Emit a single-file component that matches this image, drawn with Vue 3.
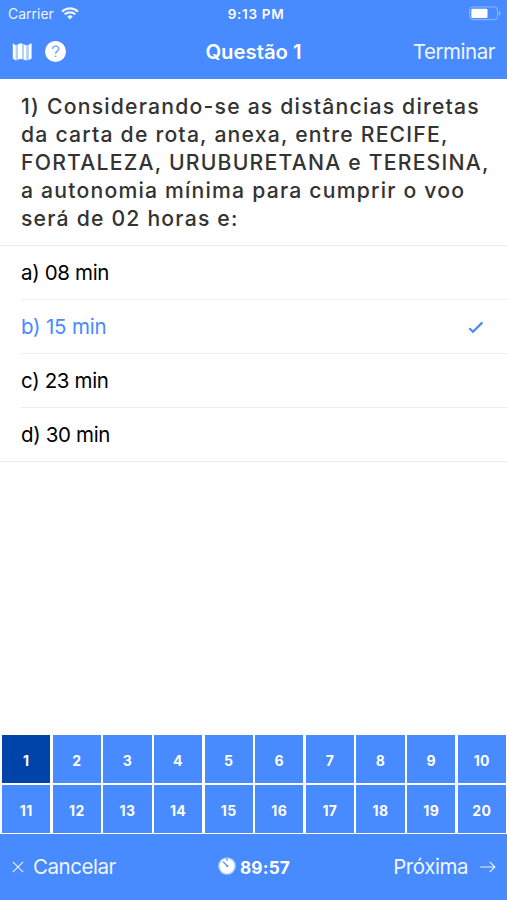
<script setup>
import { ref } from 'vue';

const lines = [
  '1) Considerando-se as distâncias diretas',
  'da carta de rota, anexa, entre RECIFE,',
  'FORTALEZA, URUBURETANA e TERESINA,',
  'a autonomia mínima para cumprir o voo',
  'será de 02 horas e:'
];

const options = [
  { id: 'a', text: '08 min' },
  { id: 'b', text: '15 min' },
  { id: 'c', text: '23 min' },
  { id: 'd', text: '30 min' }
];

const selected = ref('b');
const current = ref(1);
</script>

<template>
  <div class="screen">
    <header class="header">
      <div class="status-bar">
        <div class="carrier">
          <span>Carrier</span>
          <svg class="wifi" viewBox="0 0 18 13">
            <path d="M1 4.6a11.6 11.6 0 0 1 16 0" />
            <path d="M3.7 7.4a7.7 7.7 0 0 1 10.6 0" />
            <path class="dot" d="M9 12.4L6.2 9.6a4 4 0 0 1 5.6 0z" />
          </svg>
        </div>
        <span class="clock">9:13 PM</span>
        <svg class="battery" viewBox="0 0 32 15">
          <rect class="shell" x="0.6" y="0.9" width="28" height="12.8" rx="3.4" />
          <rect x="2.3" y="2.7" width="16.2" height="9.2" rx="1.2" />
          <path class="cap" d="M30 5v4.6c1.8-.6 1.8-4 0-4.6z" />
        </svg>
      </div>

      <div class="nav-bar">
        <div class="nav-icons">
          <svg class="map-icon" viewBox="0 0 20 18">
            <path class="fold" d="M3.8 2.3L6 1.2V16.8L3.8 17.5zM10 0.6L12 1.4V16.7L10 16.2zM14.4 2.3L16.6 1.7V17L14.4 17.6z" />
            <path d="M0.8 0.3L3.8 2.3V17.5L0.8 15.4zM6 1.2L8.6 0.2 10 0.6V16.2L8.6 15.8 6 16.8zM12 1.4L14.4 2.3V17.6L12 16.7zM16.6 1.7L19.6 0.3V15.5L16.6 17z" />
          </svg>
          <svg class="help-icon" viewBox="0 0 20 20">
            <circle cx="10" cy="10" r="10" />
            <path d="M7.1 7.6c.1-3.6 6-3.6 6-.2 0 2.2-3 2.3-3 4.7" />
            <circle class="mark" cx="10.1" cy="14.5" r="0.8" />
          </svg>
        </div>
        <h1 class="title">Questão 1</h1>
        <button class="nav-button finish">Terminar</button>
      </div>
    </header>

    <main class="content">
      <div class="question">
        <div v-for="line in lines" :key="line">{{ line }}</div>
      </div>
      <ul class="options">
        <li v-for="option in options" :key="option.id" class="option" :class="{ selected: selected === option.id }"
          @click="selected = option.id">
          <div class="option-inner">
            <span>{{ option.id }}) {{ option.text }}</span>
            <svg v-if="selected === option.id" class="check" viewBox="0 0 16 13">
              <path d="M1.3 7.3L5 10.8 14.4 1.4" />
            </svg>
          </div>
        </li>
      </ul>
    </main>

    <div class="pager">
      <button v-for="n in 20" :key="n" class="page" :class="{ active: current === n }" @click="current = n">
        {{ n }}
      </button>
    </div>

    <footer class="footer">
      <button class="nav-button cancel">
        <svg class="cross" viewBox="0 0 12 12">
          <path d="M0.8 0.8L11.2 11.2M11.2 0.8L0.8 11.2" />
        </svg>
        <span>Cancelar</span>
      </button>
      <div class="timer">
        <svg class="stopwatch" viewBox="0 0 18 18">
          <circle class="rim" cx="9" cy="9" r="8.8" />
          <circle cx="9" cy="9" r="7.4" />
          <path d="M9 1V3.8M5 4.6L9.4 9.2" />
          <circle class="pin" cx="9.3" cy="9.1" r="1.1" />
        </svg>
        <span>89:57</span>
      </div>
      <button class="nav-button next">
        <span>Próxima</span>
        <svg class="arrow" viewBox="0 0 16 12">
          <path d="M0.3 6H14.8M9.7 0.9L14.9 6 9.7 11.1" />
        </svg>
      </button>
    </footer>
  </div>
</template>

<style>
body {
  background: #fff;
}
</style>

<style scoped>
.screen {
  display: flex;
  flex-direction: column;
  height: 900px;
  background: #fff;
  color: #000;
  font-family: 'Inter', sans-serif;
}

.header {
  height: 79px;
  background: #488aff;
  color: #fff;
}

.status-bar,
.nav-bar,
.footer {
  display: grid;
  grid-template-columns: 1fr auto 1fr;
  align-items: center;
}

.status-bar {
  height: 27px;
  padding: 0 6px 0 8px;
  font-size: 14px;
}

.carrier {
  display: flex;
  align-items: center;
  gap: 7px;
  opacity: 0.9;
}

.wifi {
  width: 18px;
  height: 13px;
  fill: none;
  stroke: #fff;
  stroke-width: 2.2;
}

.wifi .dot {
  fill: #fff;
  stroke: none;
}

.clock {
  padding-left: 3px;
  font-size: 13.5px;
  font-weight: 600;
  letter-spacing: 0.7px;
}

.battery {
  width: 32px;
  height: 15px;
  justify-self: end;
  fill: #fff;
}

.battery .shell {
  fill: none;
  stroke: #fff;
  stroke-opacity: 0.4;
}

.battery .cap {
  fill-opacity: 0.5;
}

.nav-bar {
  height: 50px;
  padding: 0 12px;
}

.nav-icons {
  display: flex;
  align-items: center;
  gap: 13px;
}

.map-icon {
  width: 20px;
  height: 18px;
  fill: #fff;
}

.map-icon .fold {
  fill-opacity: 0.6;
}

.help-icon {
  width: 21px;
  height: 21px;
  margin-bottom: 1px;
  fill: #fff;
}

.help-icon path {
  fill: none;
  stroke: #6ea2ff;
  stroke-width: 1.3;
}

.help-icon .mark {
  fill: #6ea2ff;
}

.title {
  margin: 0;
  padding-bottom: 2px;
  font-size: 20.3px;
  font-weight: 600;
}

.nav-button {
  display: flex;
  align-items: center;
  padding: 0;
  border: 0;
  background: none;
  color: #fff;
  font: 400 20.5px 'Inter', sans-serif;
  letter-spacing: -0.45px;
  opacity: 0.92;
}

.finish {
  padding-bottom: 1px;
}

.finish,
.next {
  justify-self: end;
}

.content {
  flex: 1;
}

.question {
  height: 153px;
  padding: 13px 0 0 21px;
  border-bottom: 1px solid #ededed;
  color: #333;
  font-size: 21.2px;
  font-weight: 500;
  line-height: 28px;
  letter-spacing: 1.2px;
  white-space: nowrap;
}

.options {
  margin: 0;
  padding: 0;
  border-bottom: 1px solid #ededed;
  list-style: none;
}

.option {
  padding-left: 21px;
  font-size: 20.5px;
  letter-spacing: -0.35px;
}

.option-inner {
  display: flex;
  align-items: center;
  justify-content: space-between;
  height: 53px;
  padding-right: 23px;
  border-bottom: 1px solid #ededed;
}

.option:last-child .option-inner {
  border-bottom: 0;
}

.option.selected {
  color: #488aff;
  letter-spacing: -0.2px;
}

.check {
  width: 16px;
  height: 13px;
  margin-top: 2px;
  fill: none;
  stroke: #488aff;
  stroke-width: 2.2;
}

.pager {
  display: grid;
  grid-template-columns: repeat(10, 1fr);
  gap: 2px 2.3px;
  padding: 0 1px 1px 2px;
  background: #fff;
}

.page {
  height: 48px;
  padding: 2px 0 0;
  border: 0;
  background: #488aff;
  color: #fff;
  font: 700 14px 'Inter', sans-serif;
  letter-spacing: 0.4px;
}

.page.active {
  background: #0043a9;
}

.footer {
  height: 66px;
  padding: 0 11px 0 12px;
  background: #488aff;
  color: #fff;
}

.cancel {
  gap: 9px;
}

.cross {
  width: 12px;
  height: 12px;
}

.arrow {
  width: 16px;
  height: 12px;
}

.cross,
.arrow {
  fill: none;
  stroke: #fff;
  stroke-width: 1.1;
}

.timer {
  display: flex;
  align-items: center;
  gap: 4px;
  font-size: 17.2px;
  font-weight: 700;
  letter-spacing: 0.2px;
}

.stopwatch {
  width: 18px;
  height: 18px;
  margin-bottom: 3px;
  fill: #fff;
}

.stopwatch .rim {
  fill-opacity: 0.6;
}

.stopwatch path {
  fill: none;
  stroke: #488aff;
  stroke-width: 1.2;
}

.stopwatch .pin {
  fill: #488aff;
}

.cancel span,
.next span {
  padding-bottom: 1px;
}

.next {
  gap: 12px;
}
</style>
